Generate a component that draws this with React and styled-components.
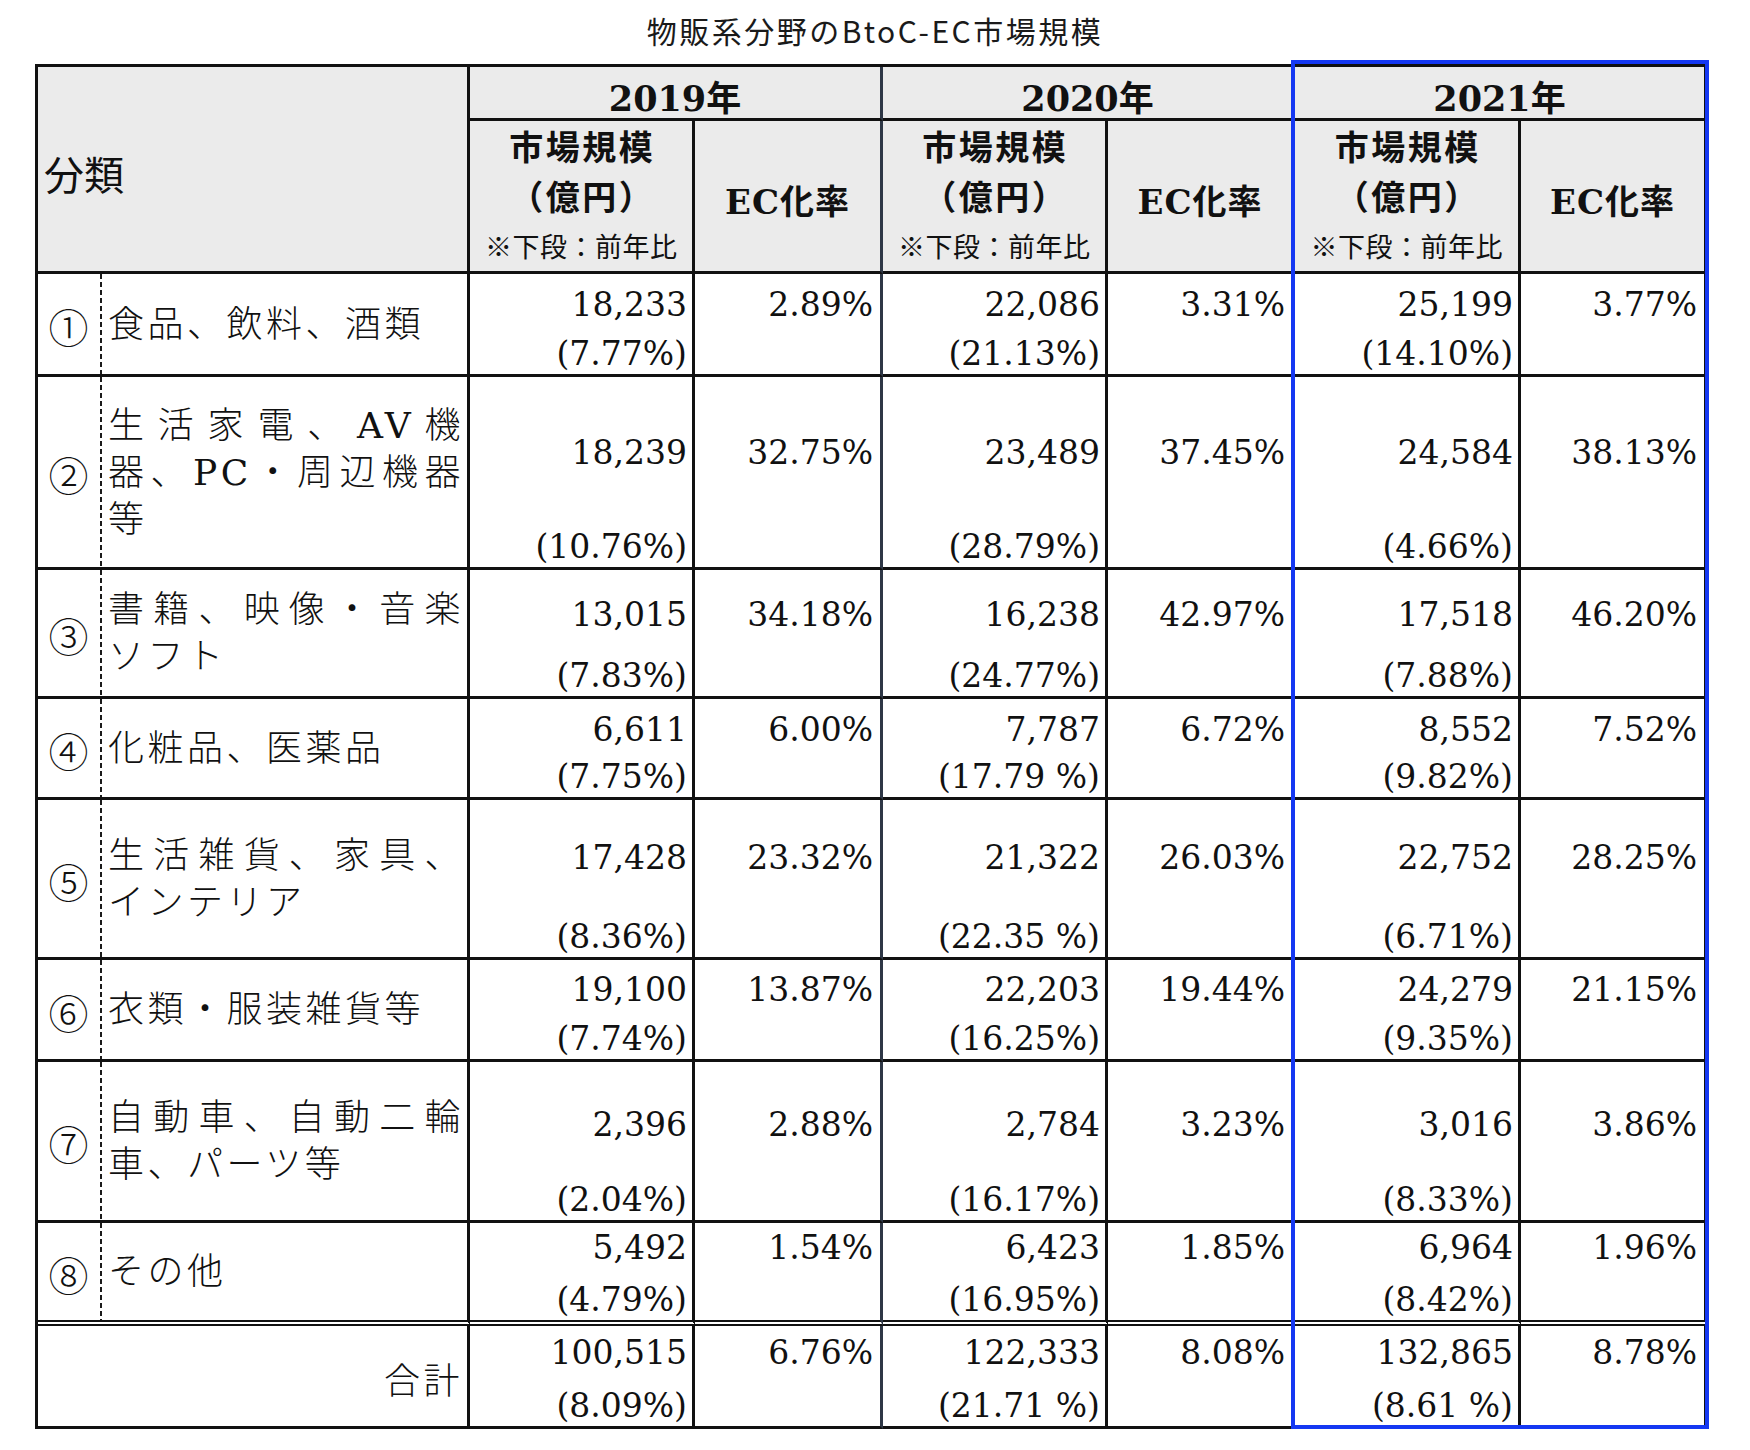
import React from 'react';
import styled, { createGlobalStyle } from 'styled-components';

const GlobalStyle = createGlobalStyle`
  *, *::before, *::after { box-sizing: border-box; }
  html, body { margin: 0; padding: 0; background: #ffffff; }
  body { font-family: "Noto Sans CJK JP", sans-serif; color: #111111; }
`;

const COLS = [64, 368, 225, 188, 225, 187, 226, 186];
const HEADER_ROWS = [54, 153];
const LINE = '#111111';
const GROUP = '#2e3746';
const HEAD_BG = '#ebebeb';
const BLUE = '#1538f2';

const SERIF = '"DejaVu Serif", "Noto Sans CJK JP", serif';
const CJK = '"Noto Sans CJK JP", sans-serif';

const rows = [
  { n: '①', lines: ['食品、飲料、酒類'], h: 103, top: 8,
    v: [['18,233', '(7.77%)', '2.89%'], ['22,086', '(21.13%)', '3.31%'], ['25,199', '(14.10%)', '3.77%']] },
  { n: '②', lines: ['生活家電、AV機', '器、PC・周辺機器', '等'], h: 193, top: 53,
    v: [['18,239', '(10.76%)', '32.75%'], ['23,489', '(28.79%)', '37.45%'], ['24,584', '(4.66%)', '38.13%']] },
  { n: '③', lines: ['書籍、映像・音楽', 'ソフト'], h: 129, top: 22,
    v: [['13,015', '(7.83%)', '34.18%'], ['16,238', '(24.77%)', '42.97%'], ['17,518', '(7.88%)', '46.20%']] },
  { n: '④', lines: ['化粧品、医薬品'], h: 101, top: 8,
    v: [['6,611', '(7.75%)', '6.00%'], ['7,787', '(17.79 %)', '6.72%'], ['8,552', '(9.82%)', '7.52%']] },
  { n: '⑤', lines: ['生活雑貨、家具、', 'インテリア'], h: 160, top: 35,
    v: [['17,428', '(8.36%)', '23.32%'], ['21,322', '(22.35 %)', '26.03%'], ['22,752', '(6.71%)', '28.25%']] },
  { n: '⑥', lines: ['衣類・服装雑貨等'], h: 102, top: 7,
    v: [['19,100', '(7.74%)', '13.87%'], ['22,203', '(16.25%)', '19.44%'], ['24,279', '(9.35%)', '21.15%']] },
  { n: '⑦', lines: ['自動車、自動二輪', '車、パーツ等'], h: 161, top: 40,
    v: [['2,396', '(2.04%)', '2.88%'], ['2,784', '(16.17%)', '3.23%'], ['3,016', '(8.33%)', '3.86%']] },
  { n: '⑧', lines: ['その他'], h: 103, top: 2,
    v: [['5,492', '(4.79%)', '1.54%'], ['6,423', '(16.95%)', '1.85%'], ['6,964', '(8.42%)', '1.96%']] },
];

const total = {
  label: '合計', h: 103, top: 4,
  v: [['100,515', '(8.09%)', '6.76%'], ['122,333', '(21.71 %)', '8.08%'], ['132,865', '(8.61 %)', '8.78%']],
};

const years = ['2019年', '2020年', '2021年'];

const Page = styled.div`
  width: 1750px;
  padding-top: 8px;
`;

const Title = styled.h1`
  margin: 0 0 12px;
  font-family: ${CJK};
  font-size: 30px;
  font-weight: 400;
  line-height: 44px;
  letter-spacing: 2.5px;
  text-align: center;
  color: #1a1a1a;
`;

const TableWrap = styled.div`
  position: relative;
  width: max-content;
  margin-left: 35px;
`;

const Table = styled.div`
  display: grid;
  grid-template-columns: ${COLS.map((c) => `${c}px`).join(' ')};
  grid-template-rows: ${(p) => p.$rows};
  border-top: 3px solid ${LINE};
  border-left: 3px solid ${LINE};
`;

const Cell = styled.div`
  min-width: 0;
  border-right: 3px solid ${(p) => (p.$group ? GROUP : LINE)};
  border-bottom: ${(p) => (p.$double ? `6px double ${LINE}` : `3px solid ${LINE}`)};
  background-color: ${(p) => (p.$head ? HEAD_BG : '#ffffff')};
`;

const CornerHead = styled(Cell)`
  grid-column: 1 / 3;
  grid-row: 1 / 3;
  display: flex;
  align-items: center;
  padding: 8px 0 0 6px;
  font-family: ${CJK};
  font-size: 40px;
  font-weight: 400;
`;

const YearHead = styled(Cell)`
  grid-column: span 2;
  display: flex;
  align-items: center;
  justify-content: center;
  padding-top: 5px;
  font-family: ${SERIF};
  font-size: 35px;
  font-weight: 700;
`;

const SubHead = styled(Cell)`
  display: flex;
  flex-direction: column;
  align-items: center;
  justify-content: center;
`;

const HeadLine = styled.div`
  height: 50px;
  line-height: 50px;
  font-family: ${CJK};
  font-size: ${(p) => (p.$small ? '27px' : '34px')};
  font-weight: ${(p) => (p.$small ? 400 : 700)};
  letter-spacing: ${(p) => (p.$small ? '0.5px' : '2.5px')};
  padding-left: ${(p) => (p.$small ? '0.5px' : '2.5px')};
  white-space: nowrap;
`;

const EcHead = styled.div`
  font-family: ${SERIF};
  font-size: 34px;
  font-weight: 700;
  letter-spacing: 1px;
  padding-top: 6px;
`;

const NumCell = styled(Cell)`
  border-right: none;
  display: flex;
  align-items: center;
  justify-content: center;
  padding: 4px 3px 0 0;
  font-family: ${CJK};
  font-size: 40px;
  font-weight: 300;
  background-image: repeating-linear-gradient(to bottom, #1a1a1a 0 5px, transparent 5px 8px);
  background-size: 2px 100%;
  background-position: right top;
  background-repeat: no-repeat;
`;

const CatCell = styled(Cell)`
  display: flex;
  flex-direction: column;
  justify-content: center;
  padding: 0 3px 0 6px;
  font-family: ${SERIF};
  font-size: 36px;
  letter-spacing: 3.5px;
  line-height: 47px;
  font-weight: 300;
`;

const CatLine = styled.div`
  text-align: justify;
  text-align-last: ${(p) => (p.$justify ? 'justify' : 'left')};
  white-space: nowrap;
`;

const TotalLabel = styled(Cell)`
  grid-column: span 2;
  display: flex;
  align-items: center;
  justify-content: flex-end;
  padding: 4px 4px 0 0;
  font-family: ${CJK};
  font-size: 36px;
  letter-spacing: 3.5px;
  font-weight: 300;
`;

const MarketCell = styled(Cell)`
  display: flex;
  flex-direction: column;
  align-items: flex-end;
  justify-content: space-between;
  padding: ${(p) => p.$top}px 5px 0 0;
  font-family: ${SERIF};
  font-size: 33px;
`;

const Amount = styled.div`
  line-height: 46px;
  white-space: nowrap;
`;

const Ratio = styled.div`
  line-height: 40px;
  white-space: nowrap;
`;

const EcCell = styled(Cell)`
  padding: ${(p) => p.$top}px 7px 0 0;
  text-align: right;
  font-family: ${SERIF};
  font-size: 33px;
  line-height: 46px;
  white-space: nowrap;
`;

const Highlight = styled.div`
  position: absolute;
  left: ${(p) => p.$left}px;
  top: -4px;
  width: ${(p) => p.$width}px;
  height: ${(p) => p.$height}px;
  border: 4px solid ${BLUE};
  pointer-events: none;
`;

function ValueCells({ v, top, double }) {
  return v.map(([amount, ratio, ec], i) => (
    <React.Fragment key={i}>
      <MarketCell $top={top} $double={double}>
        <Amount>{amount}</Amount>
        <Ratio>{ratio}</Ratio>
      </MarketCell>
      <EcCell $top={top} $double={double} $group={i < 2}>
        {ec}
      </EcCell>
    </React.Fragment>
  ));
}

export default function App() {
  const rowHeights = [...HEADER_ROWS, ...rows.map((r) => r.h), total.h];
  const template = rowHeights.map((h) => `${h}px`).join(' ');
  const tableHeight = 3 + rowHeights.reduce((a, b) => a + b, 0);
  const before2021 = 3 + COLS.slice(0, 6).reduce((a, b) => a + b, 0);
  const width2021 = COLS[6] + COLS[7];

  return (
    <Page>
      <GlobalStyle />
      <Title>物販系分野のBtoC-EC市場規模</Title>
      <TableWrap>
        <Table $rows={template}>
          <CornerHead $head>分類</CornerHead>
          {years.map((y, i) => (
            <YearHead key={y} $head $group={i < 2}>{y}</YearHead>
          ))}
          {years.map((y, i) => (
            <React.Fragment key={`sub-${y}`}>
              <SubHead $head>
                <HeadLine>市場規模</HeadLine>
                <HeadLine>（億円）</HeadLine>
                <HeadLine $small>※下段：前年比</HeadLine>
              </SubHead>
              <SubHead $head $group={i < 2}>
                <EcHead>EC化率</EcHead>
              </SubHead>
            </React.Fragment>
          ))}
          {rows.map((r, idx) => {
            const double = idx === rows.length - 1;
            return (
              <React.Fragment key={r.n}>
                <NumCell $double={double}>{r.n}</NumCell>
                <CatCell $double={double}>
                  {r.lines.map((line, li) => (
                    <CatLine key={li} $justify={li < r.lines.length - 1}>{line}</CatLine>
                  ))}
                </CatCell>
                <ValueCells v={r.v} top={r.top} double={double} />
              </React.Fragment>
            );
          })}
          <TotalLabel>{total.label}</TotalLabel>
          <ValueCells v={total.v} top={total.top} />
        </Table>
        <Highlight $left={before2021 - 4} $width={width2021 + 6} $height={tableHeight + 4} />
      </TableWrap>
    </Page>
  );
}
